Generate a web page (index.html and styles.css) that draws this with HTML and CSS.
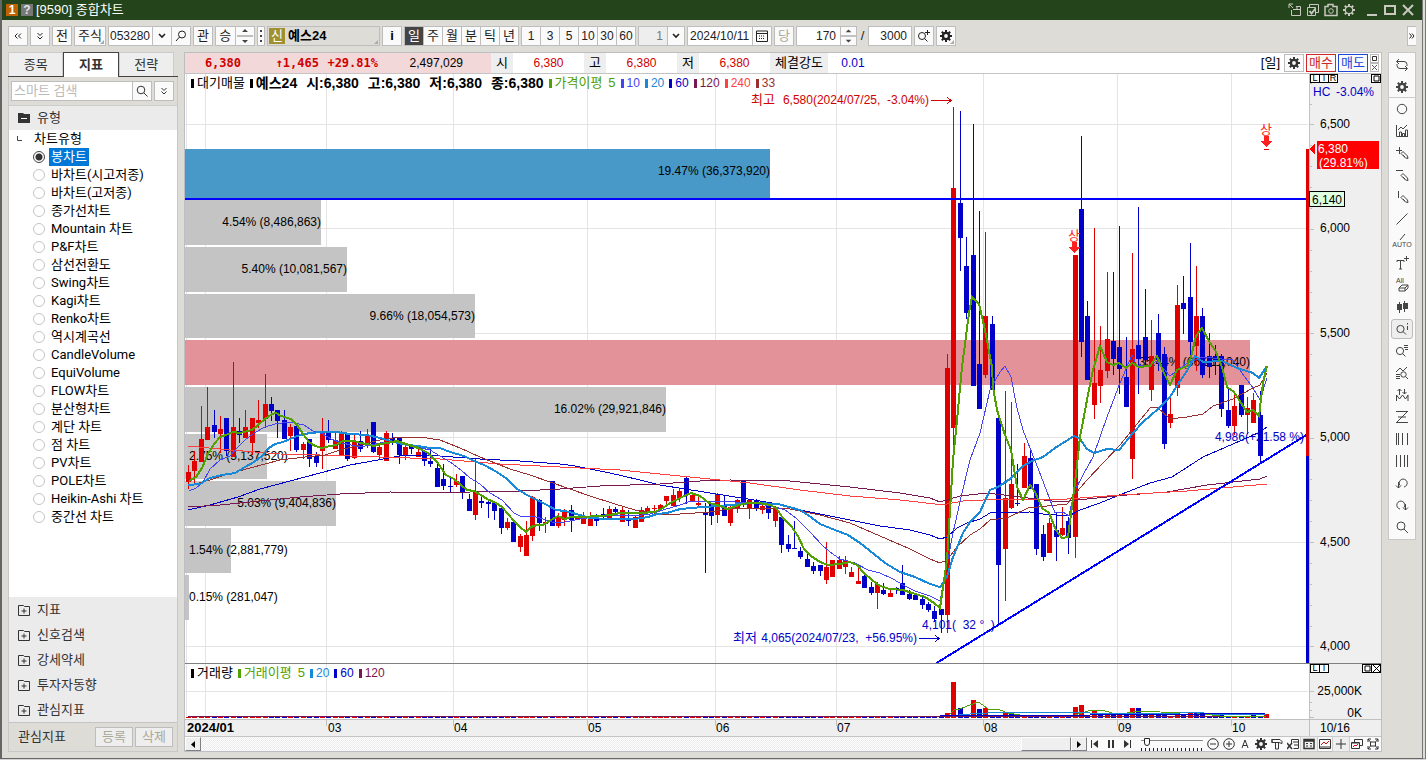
FILE: index.html
```html
<!DOCTYPE html>
<html lang="ko">
<head>
<meta charset="utf-8">
<title>[9590] 종합차트</title>
<link rel="stylesheet" href="styles.css">
</head>
<body>
<svg class="defs" aria-hidden="true">
  <symbol id="gear" viewBox="0 0 12 12"><path d="M6 0v12M0 6h12M1.8 1.8l8.4 8.4M10.2 1.8l-8.4 8.4" stroke="currentColor" stroke-width="2"/><circle cx="6" cy="6" r="3" fill="none" stroke="currentColor" stroke-width="2.6"/><circle cx="6" cy="6" r="1.9" fill="#fafafa"/></symbol>
  <symbol id="gear-line" viewBox="0 0 12 12"><path d="M6 0v2M6 10v2M0 6h2M10 6h2M1.8 1.8l1.5 1.5M8.7 8.7l1.5 1.5M10.2 1.8L8.7 3.3M3.3 8.7l-1.5 1.5" stroke="currentColor" stroke-width="2"/><circle cx="6" cy="6" r="3.7" fill="none" stroke="currentColor" stroke-width="1.3"/></symbol>
  <symbol id="lens" viewBox="0 0 12 12"><g fill="none" stroke="currentColor"><circle cx="5" cy="5" r="3.8"/><path d="M8 8l3.5 3.5"/></g></symbol>
  <symbol id="lens-left" viewBox="0 0 12 12"><g fill="none" stroke="currentColor"><circle cx="7" cy="4.5" r="3.5"/><path d="M4.5 7L1 11"/></g></symbol>
  <symbol id="folder" viewBox="0 0 12 12"><path d="M.5 1.5h5l1 1h5v9H.5z" fill="none" stroke="currentColor"/><path d="M6 4.5v5M3.5 7h5" stroke="currentColor"/></symbol>
  <symbol id="down2" viewBox="0 0 8 8"><path d="M1.5 1L4 3.5 6.500 1M1.500 4.500L4 7l2.500-2.500" fill="none" stroke="currentColor"/></symbol>
  <symbol id="chev" viewBox="0 0 8 6"><path d="M1 1l3 3 3-3" fill="none" stroke="currentColor" stroke-width="1.600"/></symbol>
  <symbol id="pen" viewBox="0 0 14 14"><path d="M6 7.500l2-2 4.500 4.500.5 2.500-2.500-.5zM8 9l2 2" fill="none" stroke="currentColor"/></symbol>
  <symbol id="spin" viewBox="0 0 16 20"><path d="M0 10h16" stroke="#bdbdbd" stroke-width="2"/><path d="M5 6l3-3 3 3zM5 14l3 3 3-3z" fill="#444"/></symbol>
</svg>
<div class="window">
  <header class="titlebar">
    <span class="badge badge-one">1</span><span class="badge badge-help">?</span>
    <h1>[9590] 종합차트</h1>
    <div class="title-actions">
      <button aria-label="분리"><svg viewBox="0 0 14 14"><path d="M1 1l4 4M1 5V1h4" fill="none" stroke="currentColor"/><path d="M8 3.500h4.500v9h-9V7M5 6.500h7M9 3v3" fill="none" stroke="currentColor"/></svg></button>
      <button aria-label="복사"><svg viewBox="0 0 14 14"><path d="M3.500 4V1.500h9v8H10M1.500 4.500h8v8h-8z" fill="none" stroke="currentColor"/><path d="M3.500 8l2 2.500 4-5" fill="none" stroke="currentColor" stroke-width="2"/></svg></button>
      <button aria-label="화면 캡처"><svg viewBox="0 0 14 14"><path d="M1 3.500h3v-2h5v2h4v9H1z" fill="none" stroke="currentColor" stroke-width="1.500"/><circle cx="7" cy="8" r="2.300" fill="none" stroke="currentColor"/></svg></button>
      <button aria-label="설정"><svg viewBox="0 0 12 12"><use href="#gear-line"/></svg></button>
      <button class="wide" aria-label="최소화"><svg viewBox="0 0 14 14"><path d="M2 12h10" stroke="currentColor" stroke-width="2"/></svg></button>
      <button class="wide" aria-label="최대화"><svg viewBox="0 0 14 14"><path d="M2 3h10v8H2z" fill="none" stroke="currentColor" stroke-width="2"/></svg></button>
      <button class="wide" aria-label="닫기"><svg viewBox="0 0 14 14"><path d="M2 2l10 10M12 2L2 12" stroke="currentColor" stroke-width="2"/></svg></button>
    </div>
  </header>

  <div class="toolbar">
    <button class="tb sq" aria-label="접기"><svg width="8" height="8" viewBox="0 0 8 8"><path d="M3.500 1.500L1 4l2.500 2.500M7 1.500L4.500 4 7 6.500" fill="none" stroke="currentColor"/></svg></button>
    <button class="tb sq" aria-label="펼치기"><svg width="8" height="8"><use href="#down2"/></svg></button>
    <button class="tb sq">전</button>
    <button class="tb kind corner">주식</button>
    <div class="group code"><input class="num" aria-label="종목코드" value="053280"><button aria-label="종목 목록"><svg width="8" height="6"><use href="#chev"/></svg></button><button aria-label="종목 검색"><svg width="12" height="12"><use href="#lens-left"/></svg></button></div>
    <button class="tb sq">관</button>
    <div class="group pair"><button>승</button><button aria-label="위아래"><svg width="16" height="20"><use href="#spin"/></svg></button></div>
    <button class="tb dots" aria-label="더보기"><svg width="4" height="14" viewBox="0 0 4 14"><path d="M1 1h2v2H1zM1 6h2v2H1zM1 11h2v2H1z" fill="#444"/></svg></button>
    <div class="name corner"><span class="tag">신</span><b>예스24</b></div>
    <button class="tb sq info">i</button>
    <div class="group even"><button class="on">일</button><button>주</button><button>월</button><button>분</button><button>틱</button><button>년</button></div>
    <div class="group even num"><button>1</button><button>3</button><button>5</button><button>10</button><button>30</button><button>60</button></div>
    <div class="group tick"><input class="num right muted" aria-label="주기" value="1"><button aria-label="주기 선택"><svg width="8" height="6"><use href="#chev"/></svg></button></div>
    <div class="group date"><input class="num" aria-label="날짜" value="2024/10/11"><button aria-label="달력"><svg width="12" height="12" viewBox="0 0 12 12"><path d="M.5 1h11v10.500H.5zM1 3.500h10" fill="none" stroke="currentColor"/><path d="M3 6h6M3 8.500h6" stroke="currentColor" stroke-dasharray="1 1"/></svg></button></div>
    <button class="tb sq dim">당</button>
    <div class="group count"><input class="num right" aria-label="봉 개수" value="170"><button aria-label="증감"><svg width="16" height="20"><use href="#spin"/></svg></button></div>
    <span class="slash">/</span>
    <div class="group total"><input class="num right" aria-label="전체 개수" value="3000"></div>
    <button class="tb sq" aria-label="추가 조회"><svg width="14" height="14" viewBox="0 0 14 14"><g fill="none" stroke="currentColor"><circle cx="5" cy="7" r="3.500"/><path d="M7.500 9.500l3 3M8 3.500h5M10.500 1v5"/></g></svg></button>
    <button class="tb sq corner" aria-label="차트 설정"><svg width="12" height="12"><use href="#gear"/></svg></button>
    <button class="tb expand" aria-label="더 보기"><svg width="6" height="8" viewBox="0 0 6 8"><path d="M.5 1.500L2.500 4l-2 2.500M3 1.500L5 4 3 6.500" fill="none" stroke="currentColor"/></svg></button>
  </div>

  <main class="body">
    <aside class="sidebar">
      <nav class="tabs"><button>종목</button><button class="on">지표</button><button>전략</button></nav>
      <div class="search"><div class="group"><input aria-label="스마트 검색" placeholder="스마트 검색"><button aria-label="검색"><svg width="12" height="12"><use href="#lens"/></svg></button></div><button class="tb sq" aria-label="검색 옵션"><svg width="8" height="8"><use href="#down2"/></svg></button></div>
      <button class="section first"><svg width="12" height="12" viewBox="0 0 12 12"><path d="M0 1h5l1 1h6v9H0z" fill="#333"/><path d="M3 6.500h6" stroke="#fff"/></svg>유형</button>
      <fieldset class="types">
        <legend><svg width="6" height="6" viewBox="0 0 6 6"><path d="M.5 0v4.500H5" fill="none" stroke="#444"/></svg>차트유형</legend>
        <label><input type="radio" name="type" checked><span>봉차트</span></label>
        <label><input type="radio" name="type"><span>바차트(시고저종)</span></label>
        <label><input type="radio" name="type"><span>바차트(고저종)</span></label>
        <label><input type="radio" name="type"><span>종가선차트</span></label>
        <label><input type="radio" name="type"><span>Mountain 차트</span></label>
        <label><input type="radio" name="type"><span>P&amp;F차트</span></label>
        <label><input type="radio" name="type"><span>삼선전환도</span></label>
        <label><input type="radio" name="type"><span>Swing차트</span></label>
        <label><input type="radio" name="type"><span>Kagi차트</span></label>
        <label><input type="radio" name="type"><span>Renko차트</span></label>
        <label><input type="radio" name="type"><span>역시계곡선</span></label>
        <label><input type="radio" name="type"><span>CandleVolume</span></label>
        <label><input type="radio" name="type"><span>EquiVolume</span></label>
        <label><input type="radio" name="type"><span>FLOW차트</span></label>
        <label><input type="radio" name="type"><span>분산형차트</span></label>
        <label><input type="radio" name="type"><span>계단 차트</span></label>
        <label><input type="radio" name="type"><span>점 차트</span></label>
        <label><input type="radio" name="type"><span>PV차트</span></label>
        <label><input type="radio" name="type"><span>POLE차트</span></label>
        <label><input type="radio" name="type"><span>Heikin-Ashi 차트</span></label>
        <label><input type="radio" name="type"><span>중간선 차트</span></label>
      </fieldset>
      <button class="section"><svg width="12" height="12"><use href="#folder"/></svg>지표</button>
      <button class="section"><svg width="12" height="12"><use href="#folder"/></svg>신호검색</button>
      <button class="section"><svg width="12" height="12"><use href="#folder"/></svg>강세약세</button>
      <button class="section"><svg width="12" height="12"><use href="#folder"/></svg>투자자동향</button>
      <button class="section"><svg width="12" height="12"><use href="#folder"/></svg>관심지표</button>
      <div class="side-foot"><span>관심지표</span><button class="tb" disabled>등록</button><button class="tb" disabled>삭제</button></div>
    </aside>

    <section class="panel">
      <div class="quote">
        <div class="hot"><b class="price">6,380</b><b class="diff">↑1,465</b><b class="rate">+29.81%</b><span class="vol">2,497,029</span></div>
        <span class="key">시</span><span class="val">6,380</span>
        <span class="key">고</span><span class="val">6,380</span>
        <span class="key">저</span><span class="val">6,380</span>
        <span class="key long">체결강도</span><span class="val low">0.01</span>
        <span class="period">[일]</span>
        <button class="tb sq" aria-label="설정"><svg width="12" height="12"><use href="#gear"/></svg></button>
        <button class="order buy">매수</button><button class="order sell">매도</button>
        <div class="mini"><button aria-label="최대화"><svg width="5" height="5" viewBox="0 0 5 5"><path d="M.5.5h4v4h-4z" fill="none" stroke="#333"/></svg></button><button aria-label="닫기"><svg width="5" height="5" viewBox="0 0 5 5"><path d="M0 0l5 5M5 0L0 5" stroke="#555"/></svg></button></div>
      </div>

      <div class="pane price-pane">
        <div class="legend"><span class="k0">대기매물</span><b class="k0 main">예스24 <i>시:6,380</i><i>고:6,380</i><i>저:6,380</i><i>종:6,380</i></b><span class="k1">가격이평 <em>5</em></span><span class="k2">10</span><span class="k3">20</span><span class="k4">60</span><span class="k5">120</span><span class="k6">240</span><span class="k7">33</span></div>
        <div class="boxes left"><button>L</button><button>I</button><button>R</button></div>
        <div class="boxes right"><button aria-label="확대"><svg width="7" height="7" viewBox="0 0 7 7"><path d="M1 1h5v5H1z" fill="none" stroke="#000"/></svg></button></div>
        <svg class="plot" viewBox="185 74 1196 589" preserveAspectRatio="xMaxYMin meet" role="img" aria-label="예스24 일봉 차트">
          <rect x="1309" y="74" width="72" height="589" fill="#efefef"/>
          <path class="grid" d="M186.500 74v589M205.500 74v589M326.500 74v589M453.500 74v589M587.500 74v589M715.500 74v589M836.500 74v589M983.500 74v589M1117.500 74v589M1231.500 74v589M185 124.500h1123M185 228.500h1123M185 333.500h1123M185 437.500h1123M185 542.500h1123M185 646.500h1123"/>
          <g id="profile"></g>
          <g id="candles"></g>
          <polyline class="ma c4" points="188,510 210,505 238,497 260,489 290,481 320,473 350,465 378,460 405,455 440,456 480,459 520,461 560,464 575,466 590,469 610,473 640,480 660,485 685,489 710,493 735,497 760,501 778,504 800,510 830,516 860,522 880,526 910,530 930,535 940,539 947,537 957,528 967,523 980,519 990,513 1030,512 1043,514 1069,516 1080,510 1100,503 1117,496 1150,483 1172,477 1203,457 1233,444 1260,432 1267,427"/>
          <polyline class="ma c5" points="188,507 220,505 260,501 300,497 340,494 390,492 440,493 500,491 520,491 560,489 600,486 660,484 700,481 730,480 790,481 810,483 850,487 900,493 930,498 940,502 960,496 987,493 1020,497 1060,502 1087,499 1127,495 1167,492 1207,485 1260,479 1267,476"/>
          <polyline class="ma c6" points="188,446 230,450 280,454 320,455 380,457 440,459 500,464 560,467 620,470 670,475 700,478 750,483 800,490 850,496 900,500 935,504 947,504 963,501 1003,499 1067,499 1120,495 1187,491 1233,487 1267,484"/>
          <polyline class="ma c7" points="188,486 210,480 225,475 250,468 280,460 305,457 325,455 340,450 360,445 380,440 400,437 420,437 440,440 460,448 480,457 510,469 530,475 550,482 570,489 590,496 615,504 635,510 660,514 680,514 710,512 735,508 770,508 790,509 820,515 850,523 880,536 910,549 930,559 940,563 947,560 957,547 970,535 980,529 990,520 1007,518 1028,508 1067,504 1074,495 1087,480 1120,445 1150,408 1157,407 1170,419 1187,417 1203,414 1213,406 1233,399 1253,388 1260,385 1267,373"/>
          <polyline class="ma c2" points="189,491 196,488 203,482 210,469 220,460 230,456 237,448 245,440 254,433 265,427 275,424 290,422 304,425 313,431 323,434 331,439 342,443 360,447 380,443 398,442 412,446 430,450 440,456 450,462 461,470 470,478 480,484 490,493 502,500 514,513 522,517 532,516 540,518 555,523 565,522 580,519 595,517 620,515 635,516 650,514 663,510 680,505 691,501 715,501 735,502 752,503 772,506 785,510 796,518 810,532 822,545 830,552 840,559 855,563 868,570 880,573 893,579 903,585 915,591 930,596 940,601 953,533 962,493 970,460 980,433 990,390 1000,372 1005,366 1011,377 1017,408 1023,430 1030,448 1041,476 1055,513 1063,512 1069,516 1074,492 1083,475 1093,457 1107,417 1120,383 1132,355 1137,366 1150,365 1157,361 1170,376 1187,363 1203,357 1222,359 1233,360 1242,373 1253,388 1260,400 1267,378"/>
          <polyline class="ma c3" points="188,485 200,484 210,478 222,475 235,473 245,467 254,462 262,456 269,448 275,444 283,442 290,439 300,435 310,433 322,432 336,432 350,434 367,435 380,438 394,442 407,445 418,446 430,448 440,448 450,452 464,456 474,461 484,465 497,472 507,479 517,489 527,495 537,500 547,505 556,510 565,511 580,515 590,518 607,519 635,519 648,517 657,514 667,513 680,509 703,507 720,506 740,504 755,503 778,504 800,510 808,515 820,524 835,530 848,535 860,543 874,554 885,563 900,572 915,577 930,584 940,587 947,577 953,557 963,533 970,522 980,512 990,490 998,487 1010,479 1023,466 1032,461 1043,457 1055,448 1074,436 1080,439 1087,449 1094,453 1107,449 1119,450 1133,433 1143,422 1158,409 1170,397 1180,381 1187,371 1195,356 1203,362 1222,361 1237,368 1253,373 1259,378 1267,366"/>
          <polyline class="ma c1" points="189,481 196,477 202,468 208,454 214,444 220,437 226,435 233,432 240,433 252,430 258,425 265,419 272,414 276,413 281,416 291,419 297,425 303,434 309,442 315,446 322,448 330,446 336,445 343,441 354,441 361,443 367,444 374,446 380,444 387,443 397,441 406,444 418,448 428,453 437,462 446,475 454,479 461,485 467,490 474,491 481,495 487,499 496,503 502,507 508,514 514,521 520,527 526,532 531,527 537,525 543,525 551,520 558,516 565,519 571,517 580,517 600,516 610,515 620,513 640,513 655,512 663,508 670,503 680,498 691,493 700,496 709,503 717,505 728,509 739,505 748,503 759,503 770,505 776,508 783,518 791,526 798,536 804,549 811,556 820,562 828,565 840,564 850,562 857,565 864,573 872,580 880,586 890,589 903,590 912,593 925,597 934,603 940,608 947,560 953,460 957,420 962,367 969,313 972,297 979,304 985,330 992,367 993,387 997,410 1005,435 1011,450 1017,487 1023,500 1030,485 1035,492 1042,508 1049,513 1056,530 1062,538 1068,537 1075,483 1080,437 1087,400 1093,370 1100,346 1107,362 1113,365 1119,363 1126,368 1132,363 1139,367 1150,366 1157,356 1164,373 1170,385 1177,370 1187,366 1191,357 1196,336 1202,328 1210,343 1215,350 1222,367 1227,387 1234,392 1241,403 1247,412 1253,410 1259,416 1263,383 1267,366"/>
          <path class="guide" d="M185 199h1123M935 664L1308 434"/>
          <path d="M1306 149h3v307h-3z" fill="#e00000"/><path d="M1306 456h3v207h-3z" fill="#0000c8"/>
          <g id="ticks"></g>
          <path d="M1309.500 74v589" stroke="#c4c4c4"/>
          <g class="up"><text class="ko" x="751" y="104">최고</text><text x="929" y="104" text-anchor="end">6,580(2024/07/25, &#160;-3.04%)</text><path class="arrow" d="M931 100.500h20M947 97l4 3.500-4 3.500"/></g>
          <g class="down"><text class="ko" x="733" y="642">최저</text><text x="917" y="642" text-anchor="end">4,065(2024/07/23, &#160;+56.95%)</text><path class="arrow" d="M919 638.500h20M935 635l4 3.500-4 3.500"/><text x="922" y="629">4,101(&#160; 32 ° &#160;)</text><text x="1304" y="441" text-anchor="end">4,986(+21.58 %)</text></g>
          <g class="signal"><text class="ko" x="1266" y="134" text-anchor="middle">상</text><path d="M1264 136h5v5h3l-5.500 6-5.500-6h3z"/><text class="ko" x="1074" y="240" text-anchor="middle">상</text><path d="M1072 242h5v5h3l-5.500 6-5.500-6h3z"/></g>
          <text class="down" x="1313" y="96">HC</text><text class="down" x="1374" y="96" text-anchor="end">-3.04%</text>
          <g class="axis"><text x="1320" y="128">6,500</text><text x="1320" y="232">6,000</text><text x="1320" y="337">5,500</text><text x="1320" y="441">5,000</text><text x="1320" y="546">4,500</text><text x="1320" y="650">4,000</text></g>
          <path d="M1309 149l6-6v12zM1317 141h62v28h-62z" fill="#f00"/>
          <g fill="#fff"><text x="1318" y="153">6,380</text><text x="1319" y="167">(29.81%)</text></g>
          <path d="M1309.500 191.500h35v15h-35z" fill="#e0ffe0" stroke="#000"/><text x="1312" y="204">6,140</text>
        </svg>
      </div>

      <div class="pane volume-pane">
        <div class="legend"><span class="k0">거래량</span><span class="k1">거래이평 <em>5</em></span><span class="k3">20</span><span class="k4">60</span><span class="k5">120</span></div>
        <div class="boxes left"><button>L</button><button>I</button></div>
        <div class="boxes right"><button aria-label="확대"><svg width="7" height="7" viewBox="0 0 7 7"><path d="M1 1h5v5H1z" fill="none" stroke="#000"/></svg></button><button aria-label="닫기"><svg width="7" height="7" viewBox="0 0 7 7"><path d="M0 0l7 7M7 0L0 7" stroke="#000"/></svg></button></div>
        <svg class="plot" viewBox="185 664 1196 72" preserveAspectRatio="xMaxYMin meet" role="img" aria-label="거래량 차트">
          <path d="M1309 664h72v72h-72zM185 719h1196v17H185z" fill="#efefef"/>
          <path class="grid" d="M186.500 664v54M205.500 664v54M326.500 664v54M453.500 664v54M587.500 664v54M715.500 664v54M836.500 664v54M983.500 664v54M1117.500 664v54M1231.500 664v54M185 691.500h1123"/>
          <g id="volumes"></g>
          <path class="ma c5" d="M188 716.500h1079"/>
          <polyline class="ma c1" points="948,716 954,710 960,709 967,706 973,704 978,702 983,705 988,709 1000,710 1008,713 1020,715 1075,715 1088,711 1102,710 1112,713 1127,713 1140,711 1160,712 1197,713 1220,716 1266,716"/>
          <polyline class="ma c2 sky" points="948,716 970,714 987,713 1080,712 1100,714 1180,713 1198,712 1210,714 1266,715"/>
          <polyline class="ma c4" points="940,716 1090,715 1200,714 1266,713"/>
          <path d="M185 719.500h1196M1309.500 664v72M1310 691.500h4M1310 717.500h4M1310 702.500h2M1310 710.500h2M326.500 720v6M453.500 720v6M587.500 720v6M715.500 720v6M836.500 720v6M983.500 720v6M1117.500 720v6M1231.500 720v6" stroke="#c0c0c0" fill="none"/>
          <g class="axis"><text x="1362" y="695" text-anchor="end">25,000K</text><text x="1362" y="717" text-anchor="end">0K</text>
          <text class="strong" x="187" y="732">2024/01</text><text x="328" y="732">03</text><text x="454" y="732">04</text><text x="588" y="732">05</text><text x="716" y="732">06</text><text x="837" y="732">07</text><text x="984" y="732">08</text><text x="1118" y="732">09</text><text x="1232" y="732">10</text><text x="1320" y="732">10/16</text></g>
        </svg>
      </div>

      <div class="navbar">
        <button class="raised" aria-label="왼쪽"><svg width="4" height="7" viewBox="0 0 4 7"><path d="M4 0v7L0 3.500z"/></svg></button>
        <div class="track"><div class="raised thumb"></div></div>
        <button class="raised" aria-label="오른쪽"><svg width="4" height="7" viewBox="0 0 4 7"><path d="M0 0v7l4-3.500z"/></svg></button>
        <button aria-label="처음"><svg viewBox="0 0 12 12"><path d="M2 2h1v8H2zM9 2v8L4 6z" fill="currentColor"/></svg></button>
        <button aria-label="일시정지"><svg viewBox="0 0 12 12"><path d="M3 2h2v8H3zM7 2h2v8H7z" fill="currentColor"/></svg></button>
        <button aria-label="끝"><svg viewBox="0 0 12 12"><path d="M9 2h1v8H9zM3 2v8l5-4z" fill="currentColor"/></svg></button>
        <input class="speed" type="range" aria-label="재생 속도" min="0" max="20" value="1">
        <button aria-label="축소"><svg viewBox="0 0 12 12"><circle cx="6" cy="6" r="5.300" fill="none" stroke="currentColor"/><path d="M3 6h6" stroke="currentColor"/></svg></button>
        <button aria-label="확대"><svg viewBox="0 0 12 12"><circle cx="6" cy="6" r="5.300" fill="none" stroke="currentColor"/><path d="M3 6h6M6 3v6" stroke="currentColor"/></svg></button>
        <button aria-label="글자"><svg viewBox="0 0 12 12"><path d="M3 10l3-8 3 8M4 7.500h4" fill="none" stroke="currentColor"/></svg></button>
        <button aria-label="설정"><svg viewBox="0 0 12 12"><use href="#gear"/></svg></button>
        <button aria-label="도구"><svg viewBox="0 0 12 12"><path d="M1 1.500h8l2 2v2L8 4.500H1zM4.500 5v6h3V5M1 1v4" fill="none" stroke="currentColor"/></svg></button>
        <button aria-label="엑셀"><svg viewBox="0 0 12 12"><path d="M4.500 5V1.500h7v9h-5M6 4h5M7 7h4" fill="none" stroke="currentColor"/><path d="M0 5l5 6M5 5l-5 6" stroke="currentColor" stroke-width="1.500"/></svg></button>
        <button class="on" aria-label="데이터창"><svg viewBox="0 0 12 12"><path d="M1 1.500h10v9H1zM1 3h10" fill="none" stroke="currentColor" stroke-width="1.500"/><path d="M3 5.500h2M7 5.500h2M3 8h2M7 8h2" stroke="currentColor"/></svg></button>
        <button aria-label="차트창"><svg viewBox="0 0 12 12"><path d="M.5 1.500h11v9H.5z" fill="none" stroke="currentColor"/><path d="M2 7l3-3 2 2 3-3" fill="none" stroke="#d01010"/><path d="M1 9h10" stroke="currentColor"/></svg></button>
        <button class="on" aria-label="십자선"><svg viewBox="0 0 12 12"><path d="M6 1v10M1 6h10" stroke="currentColor"/></svg></button>
        <button aria-label="새 창"><svg viewBox="0 0 12 12"><path d="M3.500 4V1.500h8v6H9M.5 4.500h8v6h-8z" fill="none" stroke="currentColor"/><path d="M1 5h7" stroke="currentColor"/><path d="M2 9l2-2 1 1 2-2" fill="none" stroke="#d01010"/></svg></button>
        <button aria-label="전체화면"><svg viewBox="0 0 12 12"><path d="M1 4V1h3M8 1h3v3M11 8v3H8M4 11H1V8M3.500 4h5v4h-5zM1 1l2.500 3M11 1L8.500 4M1 11l2.500-3M11 11L8.500 8" fill="none" stroke="currentColor"/></svg></button>
      </div>
    </section>

    <nav class="tools">
      <button aria-label="새로고침"><svg viewBox="0 0 14 14"><path d="M4 1L1.500 3.500 4 6M2 3.500h7q3 0 3 3V8M10 13l2.500-2.500L10 8M12 10.500H5q-3 0-3-3V6"/></svg></button>
      <button class="last" aria-label="설정"><svg viewBox="0 0 12 12"><use href="#gear"/></svg></button>
      <button aria-label="원"><svg viewBox="0 0 14 14"><circle cx="7" cy="7" r="4.700"/></svg></button>
      <button aria-label="지표"><svg viewBox="0 0 14 14"><path d="M1.500 1v11.500H13M4.500 12V8h2v4M7.500 12V9.500h2V12M10.500 12V6h2v6M3 6l3-3 2 2 4-4"/></svg></button>
      <button aria-label="십자 그리기"><svg viewBox="0 0 14 14"><path d="M1 4.500h6M4.500 1v7"/><use href="#pen"/></svg></button>
      <button aria-label="수평선 그리기"><svg viewBox="0 0 14 14"><path d="M1 2.500h7"/><use href="#pen"/></svg></button>
      <button aria-label="수직선 그리기"><svg viewBox="0 0 14 14"><path d="M3.500 1v7"/><use href="#pen"/></svg></button>
      <button aria-label="추세선"><svg viewBox="0 0 14 14"><path d="M1.500 12.500l11-11"/></svg></button>
      <button aria-label="자동 추세선"><svg viewBox="0 0 14 14"><path d="M5 6l5-6"/><text x="7" y="13" text-anchor="middle">AUTO</text></svg></button>
      <button aria-label="문자"><svg viewBox="0 0 14 14"><path d="M2 6V4.500h7V6M5.500 5v8M4 13h3M9 2.500h5M11.500 0v5"/></svg></button>
      <button aria-label="모두 지우기"><svg viewBox="0 0 14 14"><text x="5" y="5" text-anchor="middle">All</text><path d="M4 10l3-3h6l-3 3zM4 10v3h6v-3M13 7v3l-3 3"/></svg></button>
      <button aria-label="봉"><svg viewBox="0 0 14 14"><path d="M4.500 2v11M9.500 1v11"/><path class="fill" d="M2 4h5v6H2zM8 3h5v6H8z"/></svg></button>
      <button class="on" aria-label="정보 조회"><svg viewBox="0 0 14 14"><circle cx="5.500" cy="7" r="3.600"/><path d="M8 9.500l3 3M12.500 4v4M12.500 1v1.500"/></svg></button>
      <button aria-label="목록 조회"><svg viewBox="0 0 14 14"><circle cx="5" cy="7" r="3.600"/><path d="M7.500 9.500l3 3M9 1.500h4M9 3.500h4M10 5.500h3"/></svg></button>
      <button aria-label="지표 조회"><svg viewBox="0 0 14 14"><path d="M1 6l4-4 3 3 4-4M1 8.500h4M1 10.500h4M1 12.500h4"/><circle cx="8.500" cy="8.500" r="2.700"/><path d="M10.500 10.500L13 13"/></svg></button>
      <button aria-label="패턴"><svg viewBox="0 0 14 14"><path d="M1.500 13V7l3 4 3-4 3 4 2.500-4v6M4.500 7V1M2.500 3l2-2 2 2M9.500 1v5M7.500 4l2 2 2-2"/></svg></button>
      <button aria-label="되돌림"><svg viewBox="0 0 14 14"><path d="M1 1.500h12M3 7h8M1 12.500h12M12 2L2 12"/></svg></button>
      <button aria-label="피보나치 시간대"><svg viewBox="0 0 14 14"><path d="M1.500 1v12M3.500 1v12M7.500 1v12M12.500 1v12"/></svg></button>
      <button aria-label="등간격선"><svg viewBox="0 0 14 14"><path d="M1.500 1v12M5.500 1v12M9.500 1v12M12.500 1v12"/></svg></button>
      <button aria-label="실행 취소"><svg viewBox="0 0 14 14"><path d="M5 9.500a4 4 0 1 1 4 1.500M3.500 6v6M1 9.500l2.500 2.500L6 9.500"/></svg></button>
      <button aria-label="다시 실행"><svg viewBox="0 0 14 14"><path d="M9 9.500A4 4 0 1 0 5 11M10.500 6v6M8 9.500l2.500 2.500L13 9.500"/></svg></button>
      <button aria-label="돋보기"><svg viewBox="0 0 14 14"><circle cx="6" cy="6" r="4"/><path d="M9 9l4 4"/></svg></button>
    </nav>
  </main>
</div>
<script src="chart.js"></script>
</body>
</html>
```

FILE: styles.css
```css
* { box-sizing: border-box; }
body { margin: 0; height: 100vh; overflow: hidden; background: #d4d4d4; color: #222; font: 13px/16px "Liberation Sans", "Noto Sans CJK KR", sans-serif; }
button, input { margin: 0; padding: 0; border: 0; font: inherit; color: inherit; background: none; border-radius: 0; min-width: 0; }
button { display: flex; align-items: center; justify-content: center; white-space: nowrap; }
.defs { position: absolute; width: 0; height: 0; }
.num { font-size: 12px; }

.window { height: calc(100vh - 1px); display: flex; flex-direction: column; background: #dddcd7; border: solid #666; border-width: 0 4px 1px 2px; border-right: 4px double #777; }

.titlebar { flex: none; height: 20px; display: flex; align-items: center; gap: 3px; padding: 0 7px 0 4px; background: #24441c; color: #fff; }
.titlebar h1 { margin: 0; font-size: 13px; font-weight: 400; line-height: 18px; }
.badge { width: 12px; height: 12px; font-weight: 700; font-size: 12px; line-height: 12px; text-align: center; background: #c06000; }
.badge-help { background: #777; color: #e4e4e4; }
.title-actions { margin-left: auto; display: flex; gap: 4px; color: #c8c8c0; }
.title-actions svg { width: 14px; height: 14px; }
.title-actions button { width: 14px; }
.title-actions button:nth-child(5) { margin-left: 5px; }
.title-actions button:nth-child(4) svg { width: 12px; height: 12px; }

.toolbar { flex: none; display: flex; gap: 2px; padding: 6px 6px; }
.tb, .group, .name { height: 20px; border: 1px solid #bdbdbd; background: #fafafa; position: relative; }
.sq { flex: none; width: 20px; }
.kind { width: 32px; }
.corner::after { content: ""; position: absolute; right: 1px; bottom: 1px; border: solid transparent; border-width: 0 0 4px 4px; border-bottom-color: #aaa; }
.group { display: flex; background: #fff; }
.group input { flex: 1; width: 0; padding: 0 2px; outline: 0; }
.group button { border-left: 1px solid #bdbdbd; background: #fafafa; }
.code { width: 83px; }
.code button { width: 19px; }
.group.code input { padding: 0 1px; }
.pair { width: 40px; }
.pair button { flex: 1; }
.pair button:first-child, .even button:first-child { border-left: 0; }
.dots { width: 8px; }
.name { width: 113px; display: flex; align-items: center; gap: 3px; padding: 1px; background: #dddcd7; color: #000; }
.tag { width: 16px; height: 16px; background: #a09030; color: #fff; text-align: center; line-height: 15px; }
.info { font-weight: 700; color: #000; }
.even { width: 115px; }
.even button { flex: 1; }
.even .on { background: #444; color: #fff; }
.tick { width: 47px; }
.tick button { width: 17px; }
.tick .muted { background: #eee; color: #777; }
.date { width: 85px; }
.date button { width: 19px; }
.count { width: 61px; }
.count button { width: 16px; }
.total { width: 44px; }
.group .right { text-align: right; padding-right: 4px; }
.dim { color: #aaa898; }
.slash { width: 7px; line-height: 20px; text-align: center; }
.expand { width: 9px; margin-left: auto; border-right: 0; }

.body { flex: 1; min-height: 0; display: flex; align-items: stretch; gap: 6px; padding: 0 6px 6px; }

.sidebar { flex: none; width: 170px; display: flex; flex-direction: column; border: solid #c8c8c8; border-width: 0 1px 1px; color: #333; }
.tabs { display: flex; height: 25px; padding-right: 4px; border-bottom: 1px solid #444; background: #dddcd7; margin: 0 -1px; }
.tabs button { flex: 1; height: 24px; background: #eee; border: 1px solid #ccc; border-bottom: 0; }
.tabs .on { height: 25px; background: #fff; border: 1px solid #444; border-bottom: 0; font-weight: 700; }
.search { display: flex; gap: 2px; padding: 4px 3px 4px 2px; }
.search .group { flex: 1; }
.search input::placeholder { color: #bbb; opacity: 1; }
.search .group button { width: 19px; }
.section { flex: none; height: 25px; gap: 7px; padding-left: 9px; justify-content: flex-start; background: #ebebeb; }
.section.first { border-top: 1px solid #ccc; }
.types { flex: 1; min-height: 0; margin: 0; padding: 0 0 0 24px; border: 0; background: #fff; color: #000; font-family: Roboto, "Noto Sans CJK KR", sans-serif; }
.types legend { float: left; width: 100%; display: flex; align-items: center; gap: 11px; height: 18px; margin-left: -16px; padding: 0; }
.types label { display: flex; align-items: center; clear: both; gap: 5px; height: 18px; }
.types input { appearance: none; width: 12px; height: 12px; border: 1px solid #c4c4c4; border-radius: 50%; flex: none; }
.types input:checked { border-color: #444; background: radial-gradient(#333 0 3px, #fff 4px); }
.types span { padding: 0 2px; margin-left: -1px; line-height: 18px; white-space: nowrap; }
.types input:checked + span { background: #0078d7; color: #fff; }
.side-foot { flex: none; height: 29px; display: flex; align-items: center; gap: 2px; padding: 0 4px 0 9px; border-top: 1px solid #c4c4c4; }
.side-foot span { margin-right: auto; }
.side-foot .tb { width: 38px; background: #eee; color: #aaa898; }

.panel { flex: 1; min-width: 0; display: flex; flex-direction: column; border: 1px solid #bdbdc4; background: #fff; }
.quote { flex: none; height: 21px; display: flex; align-items: center; border-bottom: 1px solid #c4c4c4; font-size: 12px; color: #000; }
.hot { width: 306px; height: 20px; display: flex; align-items: center; background: #f2d8d8; }
.hot b { font: 700 12px/16px "DejaVu Sans Mono", monospace; color: #d00000; }
.price { width: 56px; text-align: right; }
.diff { width: 78px; text-align: right; }
.rate { width: 59px; text-align: right; }
.hot .vol { width: 85px; text-align: right; }
.key { width: 22px; height: 20px; line-height: 20px; font-size: 13px; text-align: center; background: #eee; }
.key.long { width: 58px; }
.val { width: 71px; text-align: center; color: #d00000; }
.val.low { width: 50px; color: #0000c8; }
.period { margin-left: auto; margin-right: 4px; font-size: 13px; }
.quote .sq { height: 18px; color: #333; }
.order { width: 30px; height: 18px; margin-left: 2px; border: 1px solid; font-size: 13px; background: #fafafa; }
.buy { color: #d02828; }
.sell { color: #2048d8; }
.mini { margin: 0 0 0 2px; width: 11px; }
.mini button { width: 9px; height: 9px; border: 1px solid #bbb; }

.pane { position: relative; display: flex; }
.price-pane { flex: 1; min-height: 0; border-bottom: 1px solid #808080; }
.volume-pane { flex: none; height: 72px; }
.plot { width: 100%; height: 100%; shape-rendering: crispEdges; font-size: 12px; }
.legend { position: absolute; left: 6px; top: 1px; display: flex; gap: 5px; white-space: nowrap; }
.legend span, .legend b { display: flex; align-items: center; gap: 3px; font-size: 12px; }
.legend span::before, .legend b::before { content: ""; width: 3px; height: 9px; background: currentColor; }
.legend .k0, .legend .k1 { font-size: 13px; }
.legend .main { font-size: 14px; }
.legend i { font-style: normal; margin-left: 6px; }
.legend em { font-style: normal; margin-left: 3px; }
.k0 { color: #000; } .k1 { color: #50a000; } .k2 { color: #4444f0; } .k3 { color: #1888d8; }
.k4 { color: #0000c8; } .k5 { color: #781850; } .k6 { color: #ff4040; } .k7 { color: #983030; }
.boxes { position: absolute; top: 0; display: flex; border: solid #000; border-width: 1px 0 1px 1px; }
.boxes.left { right: 43px; }
.volume-pane .boxes.left { right: 52px; }
.boxes.right { right: 0; }
.boxes button { width: 9px; height: 7px; border-right: 1px solid #000; font-size: 9px; line-height: 7px; color: #000; background: #fff; }
.grid { stroke: #e4e4e4; fill: none; }
.ko { font-size: 13px; }
.strong { font-weight: 700; font-size: 13px; }
.ma { fill: none; stroke-width: 1; }
.c1 { stroke: #50a000; stroke-width: 2; } .c2 { stroke: #4444f0; } .c3 { stroke: #1888d8; stroke-width: 2; }
.c4 { stroke: #0000c8; } .c5 { stroke: #781850; } .c6 { stroke: #ff4040; } .c7 { stroke: #983030; }
.volume-pane .c1 { stroke-width: 1; }
.volume-pane .sky { stroke: #1888d8; }
.guide { stroke: #0000ff; stroke-width: 2; fill: none; }
.up { fill: #d00000; stroke: none; } .down { fill: #0000c8; }
.arrow { fill: none; stroke: #d00000; }
.down .arrow { stroke: #0000c8; }
.signal { fill: #ff2020; }
.bull { fill: #e00000; } .bear { fill: #0000c8; }

.navbar { flex: none; height: 15px; display: flex; border-top: 1px solid #c4c4c4; background: #fafafa; color: #333; }
.navbar button { flex: none; width: 16px; }
.navbar button svg { width: 12px; height: 12px; }
.navbar .raised { border: 1px solid #808080; border-top-color: #fff; border-left-color: #fff; background: #efefef; }
.navbar .raised svg { width: 4px; height: 7px; }
.navbar .on { background: #eee; outline: 1px solid #ccc; }
.track { flex: 1; display: flex; justify-content: flex-end; background: repeating-conic-gradient(#ececec 0 25%, #fff 0 50%) 0 0 / 2px 2px; }
.thumb { width: 50px; }
.speed { appearance: none; width: 62px; height: 14px; margin: 0 2px 0 6px; background: linear-gradient(#888, #888) 0 3px / 100% 1px no-repeat, repeating-linear-gradient(90deg, #222 0 1px, transparent 1px 4px) 0 100% / 100% 3px no-repeat; }
.speed::-webkit-slider-thumb { appearance: none; width: 6px; height: 8px; margin-top: -4px; border: 1px solid #222; background: #fff; border-radius: 0 0 3px 3px; }

.tools { flex: none; align-self: flex-start; width: 28px; padding: 1px 0; border: 1px solid #c8c8c8; background: #fafafa; color: #444; }
.tools button { width: 22px; height: 22px; margin: 0 auto; }
.tools .last { width: 26px; border-bottom: 1px solid #ccc; }
.tools svg { width: 14px; height: 14px; fill: none; stroke: currentColor; overflow: visible; }
.tools .last svg { width: 12px; height: 12px; stroke: none; }
.tools text { font: 7px "Liberation Sans", sans-serif; fill: currentColor; stroke: none; }
.tools .fill { fill: currentColor; stroke: none; }
.tools .on { height: 20px; margin: 1px auto; border: 1px solid #bbb; border-radius: 3px; background: #eee; }
```

FILE: chart.js
```js
const NS = "http://www.w3.org/2000/svg";
const add = (id, tag, attrs, text) => {
  const el = document.createElementNS(NS, tag);
  for (const k in attrs) el.setAttribute(k, attrs[k]);
  if (text) el.textContent = text;
  document.getElementById(id).appendChild(el);
};

// Volume at price: top, bottom, right edge, label, fill
[
  [149, 198, 770, "19.47% (36,373,920)", "#4898c8"],
  [200, 245, 321, "4.54% (8,486,863)"],
  [247, 292, 347, "5.40% (10,081,567)"],
  [294, 338, 475, "9.66% (18,054,573)"],
  [340, 385, 1250, "35.44% (66,211,040)", "#e4929a"],
  [387, 432, 666, "16.02% (29,921,846)"],
  [434, 479, 267, "2.75% (5,137,520)"],
  [481, 526, 336, "5.03% (9,404,836)"],
  [528, 573, 231, "1.54% (2,881,779)"],
  [575, 620, 189, "0.15% (281,047)"]
].forEach(([t, b, r, label, fill]) => {
  add("profile", "rect", { x: 185, y: t, width: r - 185, height: b - t, fill: fill || "#c4c4c4" });
  const start = r < 300;
  add("profile", "text", { x: start ? 189 : r, y: t + 26, "text-anchor": start ? "start" : "end" }, label);
});

// Daily bars: direction, high, body top, body bottom, low
const bars = `R465,472,482,489 R451,461,471,483 R406,439,462,462 R387,427,440,440 B410,425,432,438 R416,429,434,453 B418,418,451,456 R362,427,457,457 B418,431,435,443 R410,427,438,438
R418,418,443,455 R400,420,423,428 R374,404,419,428 B397,404,411,421 B410,410,421,438 B410,420,439,439 R424,427,436,451 B425,426,450,452 R442,444,450,459 B439,439,459,467
B452,456,463,467 R418,432,451,469 B420,432,440,443 R433,440,449,449 R431,434,456,456 B434,434,459,461 R434,442,458,459 B431,441,449,452 R429,435,445,448 B422,422,452,453
R444,447,455,459 R431,433,461,461 B433,438,441,445 B437,437,455,464 R445,447,455,460 B445,446,449,454 R448,452,457,457 B451,451,461,466 B448,461,464,467 B464,468,487,487
B464,479,486,490 B478,486,487,493 R474,481,485,487 B476,476,492,499 B494,499,511,511 R459,491,515,520 B497,501,503,508 B501,502,504,518 B502,503,511,520 B507,508,528,534
R518,522,528,530 B522,522,542,542 R534,536,547,552 R521,535,556,556 R496,497,536,541 B499,500,523,531 R517,522,524,533 B481,481,526,526 R513,517,526,528 R509,511,520,526
B505,510,520,532 R516,517,519,520 R512,517,524,524 R512,517,526,526 B514,515,521,526 B508,514,516,520 R506,509,519,520 B507,509,512,513 R507,510,522,522 B510,519,521,526
R515,517,528,528 R507,510,522,522 R506,508,511,513 R505,508,509,512 R504,505,509,511 R496,496,501,505 R489,495,506,506 R489,491,498,502 B477,478,495,504 R492,495,502,502
R497,503,505,507 B503,513,515,573 B503,504,516,525 R493,494,515,523 B496,506,516,516 R506,507,523,526 R499,500,508,513 B481,481,505,507 R499,500,508,519 B499,500,508,511
R504,506,510,514 B503,506,513,519 R506,507,521,527 B517,517,545,553 B535,544,549,552 B521,548,549,549 B547,551,557,559 B554,559,567,567 B562,566,571,574 B565,565,571,576
R542,567,580,584 R560,560,577,577 R556,560,569,569 R556,560,567,574 R567,572,577,577 R565,581,584,584 B574,576,588,588 B582,587,593,595 R582,584,593,609 B583,590,594,595
R590,593,597,597 B587,588,589,594 B565,583,595,595 B590,594,599,600 B594,595,600,600 B595,599,605,609 B602,604,610,612 B606,611,619,622 B609,609,615,633 R354,368,615,633
R107,188,428,456 B111,203,238,271 B237,266,313,319 B124,255,386,386 B211,364,409,409 R232,316,375,378 B316,324,390,390 B418,418,565,625 R391,498,549,601 R402,484,508,509
B464,503,504,506 R443,456,488,488 B449,458,489,489 B484,484,549,555 B525,534,557,561 R518,523,553,553 B512,530,537,561 R507,528,535,536 B517,521,538,554 R255,255,537,558
B136,209,342,357 B301,316,380,380 R228,383,405,419 R326,370,386,403 R272,339,371,378 B272,341,359,375 B226,347,369,394 B337,377,407,407 R253,349,459,479 B207,345,359,394
B289,337,360,366 R320,356,390,401 B314,333,360,371 B347,354,444,449 R394,414,423,428 R285,305,388,396 B276,303,309,334 B243,297,342,364 R266,316,346,371 B308,316,375,378
B333,356,367,378 B345,356,362,375 B354,356,409,417 B388,410,426,428 R395,406,426,435 B385,385,415,417 R397,408,415,434 R393,400,423,423 B391,415,456,464 R149,149,150,150`.split(/\s+/);
const xAt = i => Math.round(188 + i * 6.379);
bars.forEach((bar, i) => {
  const [hi, top, bottom, lo] = bar.slice(1).split(",").map(Number);
  const cls = bar[0] === "R" ? "bull" : "bear";
  const x = xAt(i);
  add("candles", "path", { class: cls, d: `M${x} ${hi}h1V${lo}h-1zM${x - 2} ${top}h5V${bottom}h-5z` });
});

// Traded volume: height and direction where it rises above the baseline
const volume = { 119: "R5", 120: "R36", 121: "B10", 123: "R18", 124: "B9", 125: "R10", 126: "B2", 128: "R6", 129: "B4", 139: "R11", 140: "R13", 141: "B3", 142: "R8", 143: "B3", 144: "R5", 145: "B3", 146: "R5", 147: "B3", 148: "R10", 149: "B10", 150: "B5", 151: "R5", 152: "B4", 153: "B4", 155: "R6", 156: "B3", 157: "R5", 158: "B5", 159: "B4", 162: "B3", 163: "B2", 164: "R2", 165: "B2", 166: "R2", 167: "B3", 168: "B2", 169: "R4" };
bars.forEach((bar, i) => {
  const v = volume[i] || bar[0] + "1";
  add("volumes", "rect", { class: v[0] === "R" ? "bull" : "bear", x: xAt(i) - 2, y: 718 - v.slice(1), width: 5, height: v.slice(1) });
});

for (let n = 0; n <= 27; n++) {
  const y = Math.round(82.700 + n * 20.88) + 0.5;
  const major = n % 5 === 2;
  add("ticks", "path", { d: `M1310 ${y}h${major ? 4 : 2}`, stroke: "#c0c0c0" });
}
```
